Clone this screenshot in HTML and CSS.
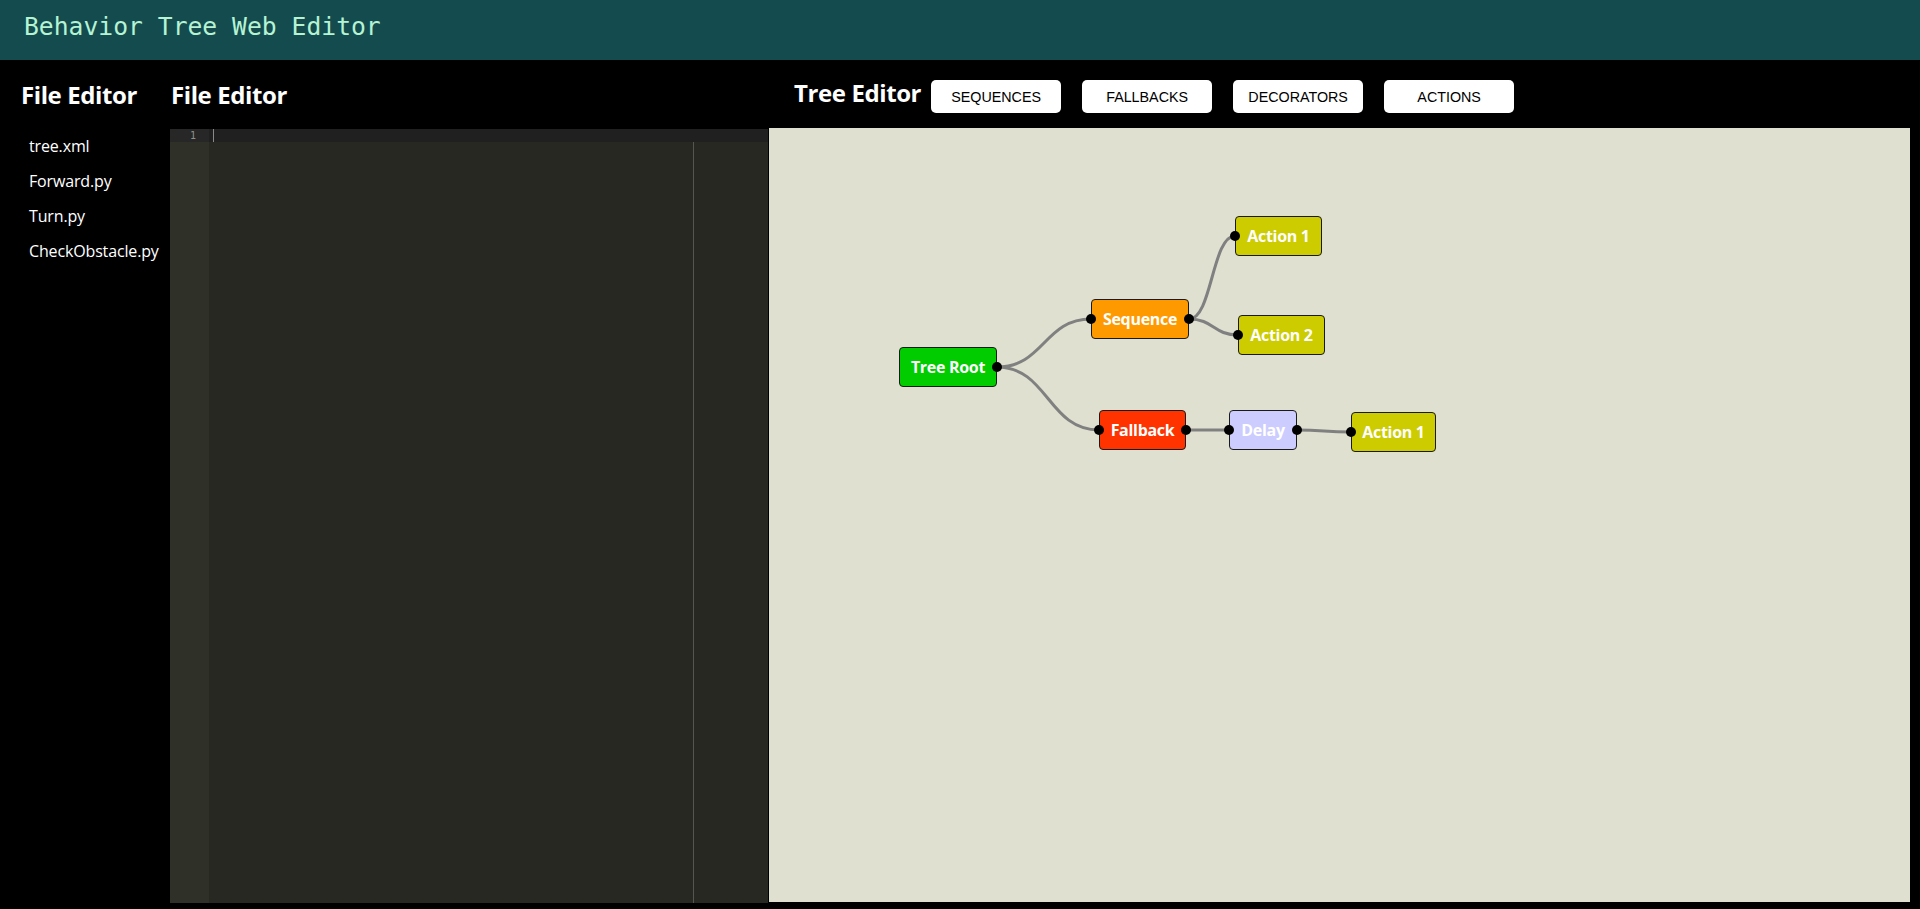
FILE: index.html
```html
<!DOCTYPE html>
<html lang="en">
<head>
<meta charset="utf-8">
<title>Behavior Tree Web Editor</title>
<link rel="stylesheet" href="styles.css">
</head>
<body>
<header class="topbar">
  <h1 class="app-title">Behavior Tree Web Editor</h1>
</header>
<main class="layout">
  <aside class="files">
    <h2 class="panel-title">File Editor</h2>
    <ul class="file-list">
      <li>tree.xml</li>
      <li>Forward.py</li>
      <li>Turn.py</li>
      <li>CheckObstacle.py</li>
    </ul>
  </aside>
  <section class="editor-col">
    <h2 class="panel-title">File Editor</h2>
    <div class="code-editor">
      <div class="gutter">
        <div class="gutter-cell active">1</div>
      </div>
      <div class="code">
        <div class="print-margin"></div>
        <div class="code-line active"><span class="cursor"></span></div>
      </div>
    </div>
  </section>
  <section class="tree-col">
    <div class="tree-head">
      <h2 class="panel-title tree-title">Tree Editor</h2>
      <button class="palette-btn">SEQUENCES</button>
      <button class="palette-btn">FALLBACKS</button>
      <button class="palette-btn">DECORATORS</button>
      <button class="palette-btn">ACTIONS</button>
    </div>
    <div class="canvas">
      <div class="node root" style="left:130px;top:219px;width:98px">Tree Root</div>
      <div class="node sequence" style="left:322px;top:171px;width:98px">Sequence</div>
      <div class="node action" style="left:466px;top:88px;width:87px">Action 1</div>
      <div class="node action" style="left:469px;top:187px;width:87px">Action 2</div>
      <div class="node fallback" style="left:330px;top:282px;width:87px">Fallback</div>
      <div class="node decorator" style="left:460px;top:282px;width:68px">Delay</div>
      <div class="node action" style="left:582px;top:284px;width:85px">Action 1</div>
      <svg class="links" width="1141" height="774" viewBox="0 0 1141 774">
        <g class="edges">
          <path d="M228 239 C275 239 275 191 322 191"/>
          <path d="M228 239 C279 239 279 302 330 302"/>
          <path d="M420 191 C443 191 443 108 466 108"/>
          <path d="M420 191 C444.5 191 444.5 207 469 207"/>
          <path d="M417 302 C438.5 302 438.5 302 460 302"/>
          <path d="M528 302 C555 302 555 304 582 304"/>
        </g>
        <g class="ports">
          <circle cx="228" cy="239" r="5"/>
          <circle cx="322" cy="191" r="5"/>
          <circle cx="420" cy="191" r="5"/>
          <circle cx="466" cy="108" r="5"/>
          <circle cx="469" cy="207" r="5"/>
          <circle cx="330" cy="302" r="5"/>
          <circle cx="417" cy="302" r="5"/>
          <circle cx="460" cy="302" r="5"/>
          <circle cx="528" cy="302" r="5"/>
          <circle cx="582" cy="304" r="5"/>
        </g>
      </svg>
    </div>
  </section>
</main>
</body>
</html>
```
FILE: styles.css
```css
* { box-sizing: border-box; }

html, body {
  margin: 0;
  padding: 0;
  background: #000;
  height: 909px;
  overflow: hidden;
  font-family: "Open Sans", "Noto Sans", sans-serif;
  color: #fff;
}

.topbar {
  height: 60px;
  background: #134b4f;
  padding-left: 24px;
}

.app-title {
  margin: 0;
  font-family: "DejaVu Sans Mono", "Liberation Mono", monospace;
  font-weight: normal;
  font-size: 24.7px;
  line-height: 54px;
  color: #b6f3d3;
}

.layout {
  display: flex;
  height: 849px;
}

.panel-title {
  margin: 0;
  font-size: 24px;
  font-weight: 700;
  letter-spacing: -0.4px;
  line-height: 30px;
  height: 68px;
  padding-top: 20px;
  color: #fff;
  white-space: nowrap;
}

.files {
  width: 170px;
  flex: none;
  padding-left: 21px;
}

.file-list {
  list-style: none;
  margin: 0;
  padding: 0 0 0 8px;
}

.file-list li {
  font-size: 16px;
  letter-spacing: -0.15px;
  line-height: 35px;
  height: 35px;
}

.file-list li:first-child { margin-top: 1px; }

.editor-col {
  width: 598px;
  flex: none;
  display: flex;
  flex-direction: column;
  padding-left: 1px;
}

.code-editor {
  margin-left: -1px;
  margin-top: 1px;
  height: 774px;
  display: flex;
  background: #272822;
}

.gutter {
  width: 39px;
  flex: none;
  background: #2f3129;
  color: #8f908a;
  font-family: "DejaVu Sans Mono", monospace;
  font-size: 10px;
}

.gutter-cell {
  height: 13px;
  line-height: 13px;
  text-align: right;
  padding-right: 13px;
}

.gutter-cell.active { background: #272727; }

.code {
  flex: 1;
  position: relative;
}

.code-line {
  height: 13px;
  position: relative;
}

.code-line.active { background: #202020; }

.cursor {
  position: absolute;
  left: 4px;
  top: 0;
  width: 1px;
  height: 13px;
  background: #8a8a8a;
}

.print-margin {
  position: absolute;
  left: 484px;
  top: 0;
  bottom: 0;
  width: 1px;
  background: #555651;
}

.tree-col {
  flex: none;
  width: 1141px;
  margin-left: 1px;
  display: flex;
  flex-direction: column;
}

.tree-head {
  display: flex;
  align-items: flex-start;
  height: 68px;
  padding: 20px 0 0 25px;
}

.tree-title {
  height: auto;
  padding-top: 0;
  margin-top: -2px;
  margin-right: 10px;
}

.palette-btn {
  width: 130px;
  height: 33px;
  margin-right: 21px;
  border: none;
  border-radius: 5px;
  background: #fff;
  color: #000;
  font-family: "Liberation Sans", Arial, sans-serif;
  font-size: 14.3px;
  padding: 0;
}

.canvas {
  position: relative;
  height: 774px;
  background: #dfe0d0;
  overflow: hidden;
}

.node {
  position: absolute;
  height: 40px;
  border: 1px solid #1a1a1a;
  border-radius: 4px;
  display: flex;
  align-items: center;
  justify-content: center;
  color: #fff;
  font-weight: 700;
  font-size: 16px;
  letter-spacing: -0.3px;
  padding-bottom: 1px;
  white-space: nowrap;
}

.node.root { background: #00cc00; }
.node.sequence { background: #ff9900; }
.node.action { background: #cccc00; }
.node.fallback { background: #ff3300; }
.node.decorator { background: #ccccff; }

.links {
  position: absolute;
  left: 0;
  top: 0;
  pointer-events: none;
}

.edges path {
  fill: none;
  stroke: #808080;
  stroke-width: 3;
}

.ports circle { fill: #000; }
```
